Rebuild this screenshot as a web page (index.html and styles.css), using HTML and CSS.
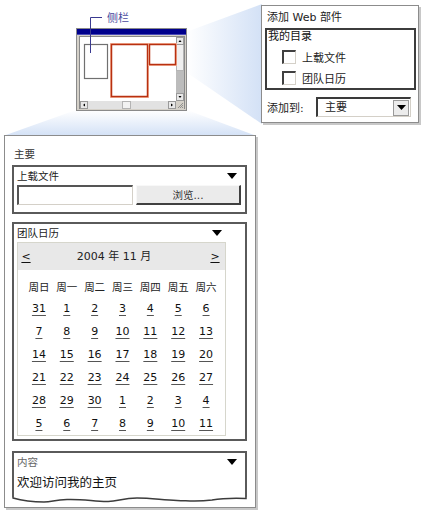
FILE: index.html
```html
<!DOCTYPE html>
<html lang="zh-CN">
<head>
<meta charset="utf-8">
<title>添加 Web 部件</title>
<link rel="stylesheet" href="styles.css">
</head>
<body>
<div class="canvas">
  <svg class="fans" width="429" height="517" viewBox="0 0 429 517">
    <defs>
      <linearGradient id="gr" x1="0" y1="0" x2="1" y2="0">
        <stop offset="0" stop-color="#ffffff"/>
        <stop offset="1" stop-color="#d3e1f6"/>
      </linearGradient>
      <linearGradient id="gb" x1="0" y1="0" x2="0" y2="1">
        <stop offset="0" stop-color="#ffffff"/>
        <stop offset="1" stop-color="#d3e1f6"/>
      </linearGradient>
    </defs>
    <polygon points="186,32 262,4 262,124 186,72" fill="url(#gr)"/>
    <polygon points="76,110 187,110 257,136 3,136" fill="url(#gb)"/>
  </svg>

  <svg class="mini" width="111" height="83" viewBox="0 0 111 83">
    <rect x="0.5" y="0.5" width="110" height="82" fill="#d4d0c8" stroke="#8a8a8a"/>
    <rect x="1" y="1" width="109" height="6" fill="#00008c"/>
    <rect x="1" y="6" width="109" height="1" fill="#4a4ab8"/>
    <rect x="3.5" y="8.5" width="105" height="72" fill="#ffffff" stroke="#8a8a8a"/>
    <!-- vertical scrollbar -->
    <rect x="100" y="9" width="8" height="64" fill="#bcbcbc"/>
    <rect x="100.5" y="16.5" width="7" height="26" fill="#efefef" stroke="#b4b4b4"/>
    <rect x="100.5" y="9.5" width="7" height="7" fill="#e8e8e8" stroke="#9a9a9a"/>
    <polygon points="102.5,14 105.5,14 104,12" fill="#000"/>
    <rect x="100.5" y="65.5" width="7" height="7" fill="#e8e8e8" stroke="#9a9a9a"/>
    <polygon points="102.5,68 105.5,68 104,70" fill="#000"/>
    <!-- horizontal scrollbar -->
    <rect x="4" y="73" width="96" height="8" fill="#e2e2e2"/>
    <rect x="4.5" y="73.5" width="7" height="7" fill="#e8e8e8" stroke="#9a9a9a"/>
    <polygon points="9,75.5 9,78.5 7,77" fill="#000"/>
    <rect x="46.5" y="73.5" width="8" height="7" fill="#f2f2f2" stroke="#b4b4b4"/>
    <rect x="92.5" y="73.5" width="7" height="7" fill="#e8e8e8" stroke="#9a9a9a"/>
    <polygon points="95,75.5 95,78.5 97,77" fill="#000"/>
    <!-- grip -->
    <rect x="100" y="73" width="8" height="8" fill="#d4d0c8"/>
    <path d="M102,80 L107,75 M104,80 L107,77 M106,80 L107,79" stroke="#808080" stroke-width="0.8"/>
    <!-- web part zones -->
    <rect x="8.5" y="16.5" width="23" height="34" fill="#ffffff" stroke="#707070" stroke-width="1.2"/>
    <rect x="34.5" y="15.5" width="38" height="54" fill="none" stroke="#f6b39a" stroke-width="1"/>
    <rect x="35.5" y="16.5" width="36" height="52" fill="#ffffff" stroke="#b83010" stroke-width="1.5"/>
    <rect x="72.5" y="15.5" width="28" height="22" fill="none" stroke="#f6b39a" stroke-width="1"/>
    <rect x="73.5" y="16.5" width="26" height="20" fill="#ffffff" stroke="#b83010" stroke-width="1.5"/>
  </svg>

  <svg class="pointer" width="20" height="45" viewBox="0 0 20 45">
    <path d="M5.5,41 L5.5,5.5 L17,5.5" fill="none" stroke="#3a3a90" stroke-width="1"/>
  </svg>
  <div class="pointer-label">侧栏</div>

  <div class="addpanel">
    <div class="ap-title">添加 Web 部件</div>
    <div class="catalog">
      <div class="catalog-name">我的目录</div>
      <div class="cb-row"><span class="checkbox"></span><span>上载文件</span></div>
      <div class="cb-row"><span class="checkbox"></span><span>团队日历</span></div>
    </div>
    <div class="addto">
      <span class="addto-label">添加到:</span>
      <div class="select">
        <span class="select-value">主要</span>
        <span class="select-btn"><svg width="9" height="5" viewBox="0 0 9 5"><polygon points="0,0 9,0 4.5,5" fill="#000"/></svg></span>
      </div>
    </div>
  </div>

  <div class="mainpanel">
    <div class="zone-title">主要</div>

    <div class="part upload">
      <div class="part-head">
        <span>上载文件</span>
        <svg class="menu-arrow" width="10" height="6" viewBox="0 0 10 6"><polygon points="0,0 10,0 5,6" fill="#000"/></svg>
      </div>
      <div class="upload-row">
        <span class="file-input"></span>
        <span class="browse">浏览...</span>
      </div>
    </div>

    <div class="part calendar-part">
      <div class="part-head head-cal">
        <span>团队日历</span>
        <svg class="menu-arrow" width="10" height="6" viewBox="0 0 10 6"><polygon points="0,0 10,0 5,6" fill="#000"/></svg>
      </div>
      <div class="calendar">
        <div class="cal-head">
          <span class="cal-nav">&lt;</span>
          <span class="cal-month">2004 年 11 月</span>
          <span class="cal-nav">&gt;</span>
        </div>
        <div class="cal-grid">
          <span class="dow">周日</span><span class="dow">周一</span><span class="dow">周二</span><span class="dow">周三</span><span class="dow">周四</span><span class="dow">周五</span><span class="dow">周六</span>
          <span class="day">31</span><span class="day">1</span><span class="day">2</span><span class="day">3</span><span class="day">4</span><span class="day">5</span><span class="day">6</span>
          <span class="day">7</span><span class="day">8</span><span class="day">9</span><span class="day">10</span><span class="day">11</span><span class="day">12</span><span class="day">13</span>
          <span class="day">14</span><span class="day">15</span><span class="day">16</span><span class="day">17</span><span class="day">18</span><span class="day">19</span><span class="day">20</span>
          <span class="day">21</span><span class="day">22</span><span class="day">23</span><span class="day">24</span><span class="day">25</span><span class="day">26</span><span class="day">27</span>
          <span class="day">28</span><span class="day">29</span><span class="day">30</span><span class="day">1</span><span class="day">2</span><span class="day">3</span><span class="day">4</span>
          <span class="day">5</span><span class="day">6</span><span class="day">7</span><span class="day">8</span><span class="day">9</span><span class="day">10</span><span class="day">11</span>
        </div>
      </div>
    </div>

    <div class="content-part">
      <div class="part content">
        <div class="part-head head-content">
          <span>内容</span>
          <svg class="menu-arrow" width="10" height="6" viewBox="0 0 10 6"><polygon points="0,0 10,0 5,6" fill="#000"/></svg>
        </div>
        <div class="content-text">欢迎访问我的主页</div>
      </div>
      <svg class="torn" width="235" height="9" viewBox="0 0 235 9">
        <path d="M1,0 L1,1 C8,3 20,5 32,5 C40,5 42,3 55,2.5 C70,2 80,4 95,4.5 C105,5 110,1 125,1 C140,1 150,3 165,3.5 C180,4 185,5 200,3 C212,1 220,1 234,1.5 L234,0" fill="none" stroke="#3c3c3c" stroke-width="1.5"/>
      </svg>
    </div>
  </div>
</div>
</body>
</html>
```

FILE: styles.css
```css
* { box-sizing: border-box; }

html, body {
  margin: 0;
  padding: 0;
  background: #ffffff;
}

body {
  font-family: "DejaVu Sans", "Noto Sans CJK SC", sans-serif;
  font-size: 11px;
  color: #111111;
}

.canvas {
  position: relative;
  width: 429px;
  height: 517px;
  overflow: hidden;
}

.fans {
  position: absolute;
  left: 0;
  top: 0;
}

.mini {
  position: absolute;
  left: 76px;
  top: 28px;
}

.pointer {
  position: absolute;
  left: 85px;
  top: 12px;
}

.pointer-label {
  position: absolute;
  left: 107px;
  top: 9px;
  font-family: "Noto Sans CJK SC", sans-serif;
  font-size: 11px;
  line-height: 16px;
  color: #4a4a9e;
}

/* ---------- Add web part panel ---------- */
.addpanel {
  position: absolute;
  left: 261px;
  top: 5px;
  width: 158px;
  height: 118px;
  background: #ffffff;
  border: 1px solid #8c8c8c;
  box-shadow: 2px 2px 0 #c8c8c8;
  padding: 2px 2px 0 3px;
}

.ap-title {
  height: 20px;
  line-height: 20px;
  padding-left: 2px;
  font-size: 11px;
  color: #222;
}

.catalog {
  height: 62px;
  border: 2px solid #3c3c3c;
  padding-left: 1px;
}

.catalog-name {
  height: 16px;
  line-height: 14px;
  font-size: 11px;
}

.cb-row {
  display: flex;
  align-items: center;
  height: 21px;
  padding-left: 14px;
  gap: 6px;
  font-size: 11px;
  color: #222;
}

.checkbox {
  display: block;
  width: 14px;
  height: 14px;
  background: #ffffff;
  border-top: 2px solid #404040;
  border-left: 2px solid #404040;
  border-right: 1px solid #d4d0c8;
  border-bottom: 1px solid #d4d0c8;
}

.addto {
  display: flex;
  align-items: center;
  margin-top: 7px;
  height: 20px;
}

.addto-label {
  width: 51px;
  padding-left: 2px;
  font-size: 11px;
  color: #222;
}

.select {
  display: flex;
  align-items: center;
  width: 95px;
  height: 20px;
  border-top: 2px solid #3a3a3a;
  border-left: 2px solid #3a3a3a;
  border-right: 1px solid #d4d0c8;
  border-bottom: 1px solid #d4d0c8;
  background: #ffffff;
}

.select-value {
  flex: 1;
  padding-left: 7px;
  font-size: 11px;
  line-height: 16px;
  color: #222;
}

.select-btn {
  display: flex;
  align-items: center;
  justify-content: center;
  width: 16px;
  height: 16px;
  margin-right: 1px;
  background: #ececec;
  border: 1px solid #9a9a9a;
}

/* ---------- Main zone panel ---------- */
.mainpanel {
  position: absolute;
  left: 4px;
  top: 135px;
  width: 252px;
  height: 373px;
  background: #ffffff;
  border: 1px solid #8c8c8c;
  box-shadow: 2px 2px 0 #c8c8c8;
  padding: 10px 8px 0 7px;
}

.zone-title {
  height: 16px;
  line-height: 16px;
  padding-left: 2px;
  font-size: 10.5px;
  color: #333;
  margin-bottom: 3px;
}

.part {
  border: 2px solid #5a5a5a;
  padding: 0 0 0 3px;
}

.part-head {
  display: flex;
  align-items: center;
  justify-content: space-between;
  height: 17px;
  font-size: 10.5px;
  color: #222;
  padding-right: 8px;
}

.menu-arrow {
  display: block;
}

.upload {
  height: 49px;
}

.upload-row {
  display: flex;
  gap: 3px;
  margin-top: 1px;
  height: 20px;
}

.file-input {
  display: block;
  width: 116px;
  height: 20px;
  background: #ffffff;
  border-top: 2px solid #555;
  border-left: 2px solid #555;
  border-right: 1px solid #d4d0c8;
  border-bottom: 1px solid #d4d0c8;
}

.browse {
  display: flex;
  align-items: center;
  justify-content: center;
  width: 105px;
  height: 20px;
  background: #ebebeb;
  border-top: 1px solid #f8f8f8;
  border-left: 1px solid #f8f8f8;
  border-right: 2px solid #404040;
  border-bottom: 2px solid #404040;
  font-size: 10.5px;
  color: #333;
}

.calendar-part {
  margin-top: 8px;
  height: 219px;
}

.head-cal {
  padding-right: 23px;
}

.calendar {
  width: 209px;
  margin-top: 1px;
  border: 1px solid #d6d6cc;
}

.cal-head {
  display: grid;
  grid-template-columns: 20px 1fr 20px;
  align-items: center;
  height: 27px;
  background: #e8e8e8;
  font-size: 11px;
}

.cal-nav {
  text-align: center;
  text-decoration: underline;
  text-underline-offset: 2px;
  line-height: 14px;
}

.cal-nav:first-child {
  padding-right: 4px;
}

.cal-month {
  text-align: center;
  padding-right: 15px;
  line-height: 14px;
  color: #222;
}

.cal-grid {
  display: grid;
  grid-template-columns: repeat(7, 1fr);
  padding: 0 5px 0 7px;
}

.dow {
  height: 27px;
  padding-top: 10px;
  line-height: 14px;
  text-align: center;
  font-size: 10.5px;
  color: #222;
}

.day {
  height: 23px;
  line-height: 23px;
  text-align: center;
  font-size: 11px;
  color: #111;
  text-decoration: underline;
  text-decoration-color: #555;
  text-underline-offset: 3px;
}

.content-part {
  margin-top: 10px;
}

.content {
  height: 46px;
  border-bottom: none;
}

.head-content {
  color: #666;
}

.content-text {
  margin-top: 3px;
  height: 20px;
  line-height: 20px;
  font-size: 12.5px;
  color: #111;
}

.torn {
  display: block;
}
```
